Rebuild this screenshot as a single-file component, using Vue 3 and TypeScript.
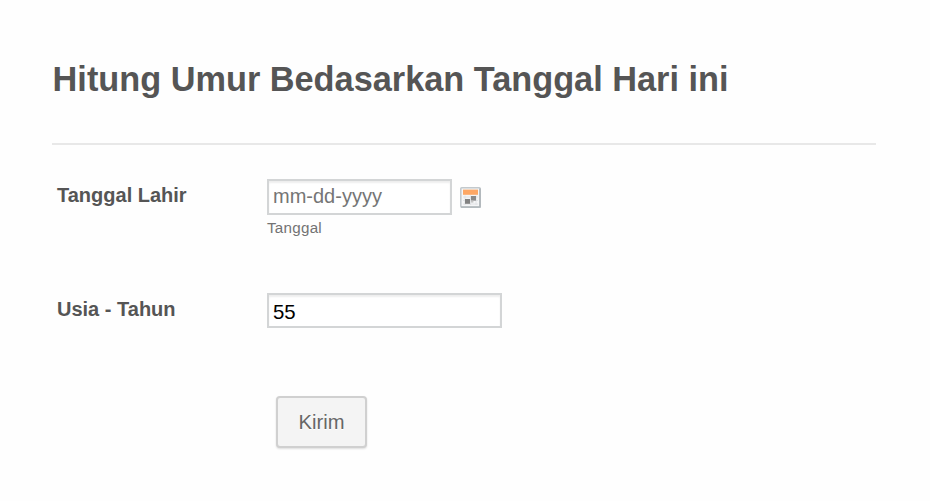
<script setup lang="ts">
import { ref } from 'vue'

const birthDate = ref<string>('')
const age = ref<string>('55')
</script>

<template>
  <form class="form" @submit.prevent>
    <header class="form-header">
      <h1 class="title">Hitung Umur Bedasarkan Tanggal Hari ini</h1>
    </header>

    <div class="row row-date">
      <label class="label" for="birth">Tanggal Lahir</label>
      <div class="field">
        <div class="date-line">
          <input id="birth" v-model="birthDate" class="input input-date" type="text" placeholder="mm-dd-yyyy" />
          <svg class="calendar" width="21" height="21" viewBox="0 0 21 21" aria-hidden="true">
            <rect x="0.8" y="0.8" width="19.4" height="19.4" rx="1" fill="#f5f6f7" stroke="#c3c9cd" stroke-width="1.6" />
            <path d="M1 20H20V1.5" fill="none" stroke="#b0b6ba" stroke-width="1.6" />
            <rect x="3" y="2.6" width="15" height="5.2" fill="#fda765" />
            <path d="M3 10H18M3 13.5H18M3 17H18M5 8.5V18M10.5 8.5V18M16 8.5V18" stroke="#dde0e2" stroke-width="0.8" />
            <rect x="11" y="9" width="5" height="4.6" fill="#8a8a8a" />
            <rect x="5" y="12" width="5" height="4.8" fill="#828282" />
            <rect x="11" y="13.6" width="2.4" height="2" fill="#c4c4c4" />
          </svg>
        </div>
        <span class="sublabel">Tanggal</span>
      </div>
    </div>

    <div class="row row-age">
      <label class="label" for="age">Usia - Tahun</label>
      <div class="field">
        <input id="age" v-model="age" class="input input-age" type="text" />
      </div>
    </div>

    <div class="actions">
      <button class="submit" type="submit">Kirim</button>
    </div>
  </form>
</template>

<style>
body {
  background: #fefefe;
}
</style>

<style scoped>
.form {
  box-sizing: border-box;
  width: 930px;
  height: 501px;
  padding: 0 54px 0 52px;
  overflow: hidden;
  color: #555;
  font-family: "Liberation Sans", Arial, sans-serif;
}
.form-header {
  box-sizing: border-box;
  height: 145px;
  padding-top: 59px;
  border-bottom: 2px solid #e8e8e8;
}
.title {
  margin: 0;
  padding-left: 0.6px;
  font-size: 34.3px;
  line-height: 40px;
  font-weight: bold;
  white-space: nowrap;
}
.row {
  display: flex;
  padding-left: 5px;
}
.row-date {
  height: 114px;
  padding-top: 34px;
}
.label {
  width: 210px;
  padding-top: 5px;
  font-size: 20px;
  line-height: 23px;
  font-weight: bold;
}
.date-line {
  display: flex;
}
.input {
  display: block;
  box-sizing: border-box;
  margin: 0;
  padding: 0 4px 1px;
  border: 2px solid #d3d5d6;
  border-radius: 0;
  background: #fff;
  box-shadow: inset 0 2px 2px #eee;
  outline: none;
  color: #000;
  font-family: inherit;
  font-size: 20px;
}
.input::placeholder {
  color: #757575;
  opacity: 1;
}
.input-date {
  width: 185px;
  height: 36px;
}
.input-age {
  width: 235px;
  height: 35px;
  padding: 3px 4px 0;
  font-size: 20.4px;
}
.calendar {
  margin: 8px 0 0 8px;
}
.sublabel {
  display: block;
  margin-top: 4px;
  color: #737373;
  font-size: 15.2px;
  line-height: 18px;
  letter-spacing: 0.25px;
}
.actions {
  padding: 68px 0 0 224px;
}
.submit {
  display: block;
  box-sizing: border-box;
  width: 91px;
  height: 52px;
  padding: 0;
  border: 2px solid #d0d0d0;
  border-radius: 4px;
  background: #f4f4f4;
  box-shadow: 0 1px 2px #ddd;
  color: #666;
  font-family: inherit;
  font-size: 20.2px;
  text-shadow: 0 1px #fff;
}
</style>
